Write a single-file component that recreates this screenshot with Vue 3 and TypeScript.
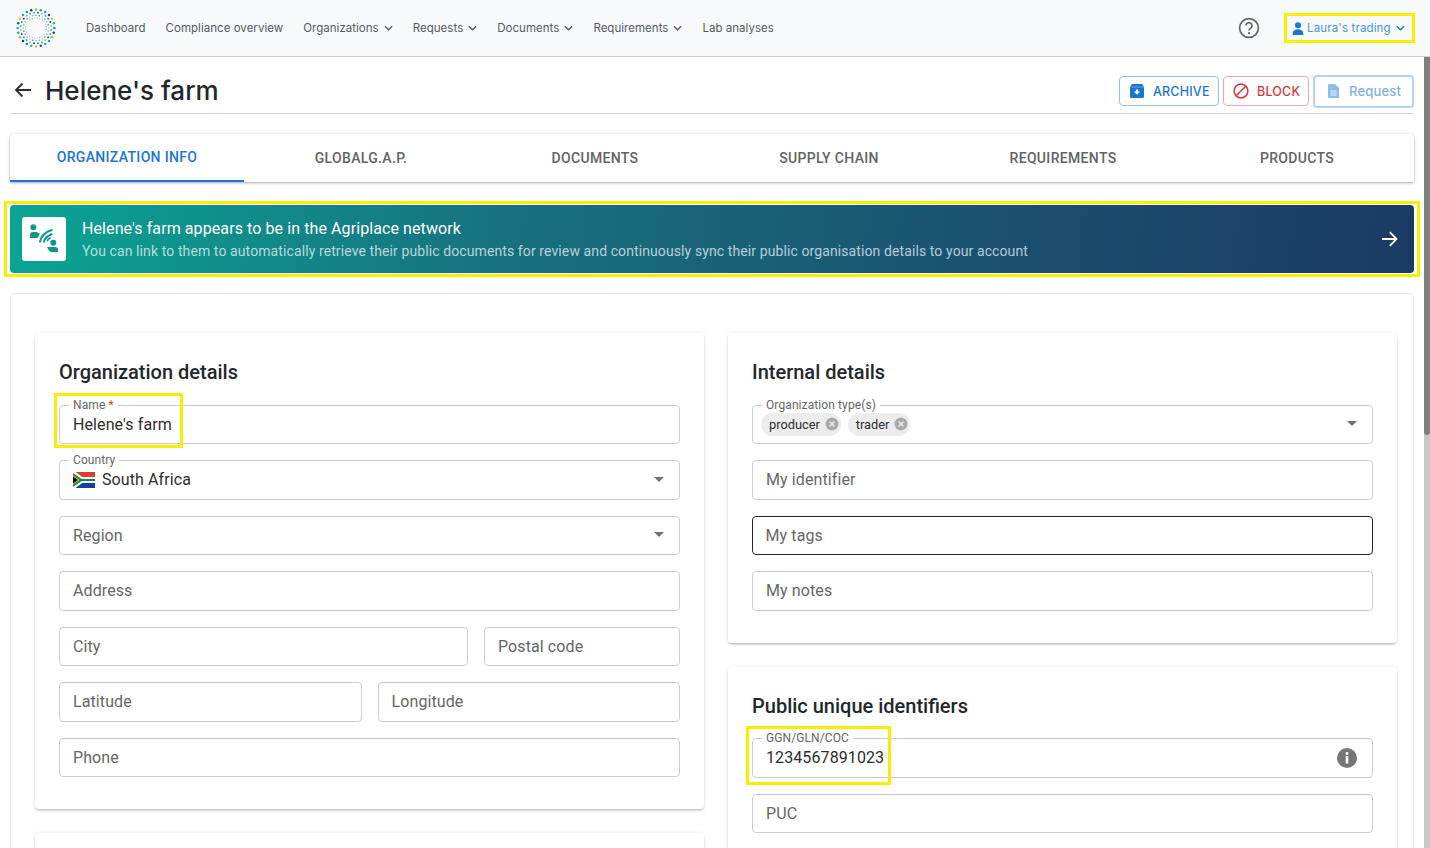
<script setup lang="ts">
const palette = ['#1f7fd6', '#1e3f66', '#8cc63f', '#17a89b', '#2a9fe0', '#24507f', '#a6d04a', '#1fb5a8']
interface Dot { x: number; y: number; r: number; c: string; o: number }
const dots: Dot[] = []
const rings = [
  { rad: 18.4, r: 1.25, off: 0, o: 1 },
  { rad: 15.4, r: 1.0, off: 0.5, o: 0.95 },
  { rad: 12.6, r: 0.75, off: 0, o: 0.8 },
  { rad: 10.2, r: 0.55, off: 0.5, o: 0.6 },
]
rings.forEach((ring, ri) => {
  for (let i = 0; i < 24; i++) {
    const a = ((i + ring.off) / 24) * Math.PI * 2
    dots.push({
      x: +(20 + ring.rad * Math.cos(a)).toFixed(2),
      y: +(20 + ring.rad * Math.sin(a)).toFixed(2),
      r: ring.r,
      c: palette[(i + ri * 3) % palette.length],
      o: ring.o,
    })
  }
})
const tabs = ['Organization info', 'GlobalG.A.P.', 'Documents', 'Supply chain', 'Requirements', 'Products']
</script>

<template>
  <div class="app">
    <header class="topbar">
      <svg class="logo" width="40" height="40" viewBox="0 0 40 40">
        <circle v-for="(d, i) in dots" :key="i" :cx="d.x" :cy="d.y" :r="d.r" :fill="d.c" :opacity="d.o" />
      </svg>
      <nav class="nav">
        <a>Dashboard</a>
        <a>Compliance overview</a>
        <a>Organizations <svg class="chev" viewBox="0 0 10 6"><path d="M1 1l4 4 4-4" /></svg></a>
        <a>Requests <svg class="chev" viewBox="0 0 10 6"><path d="M1 1l4 4 4-4" /></svg></a>
        <a>Documents <svg class="chev" viewBox="0 0 10 6"><path d="M1 1l4 4 4-4" /></svg></a>
        <a>Requirements <svg class="chev" viewBox="0 0 10 6"><path d="M1 1l4 4 4-4" /></svg></a>
        <a>Lab analyses</a>
      </nav>
      <svg class="help" width="22" height="22" viewBox="0 0 22 22">
        <circle cx="11" cy="11" r="9.4" fill="none" stroke="#666" stroke-width="1.7" />
        <path d="M8 8.600a3 3 0 1 1 4.700 2.500c-1.100.7-1.700 1.200-1.700 2.500" fill="none" stroke="#666" stroke-width="1.7" />
        <circle cx="11" cy="16.200" r="1.100" fill="#666" />
      </svg>
      <div class="user">
        <svg width="12" height="13" viewBox="0 0 12 13"><circle cx="6" cy="3.300" r="3" fill="#1976d2" /><path d="M.8 13v-1.800C.8 8.600 3 7.300 6 7.300s5.200 1.300 5.200 3.900V13z" fill="#1976d2" /></svg>
        <span>Laura's trading</span>
        <svg class="chev blue" viewBox="0 0 10 6"><path d="M1 1l4 4 4-4" /></svg>
        <i class="mark mark-user"></i>
      </div>
    </header>

    <div class="body">
      <main class="content">
        <div class="titlebar">
          <svg class="back" width="18" height="16" viewBox="0 0 18 16"><path d="M17 8H2M8.500 1.500L2 8l6.500 6.500" fill="none" stroke="#2b2f33" stroke-width="1.900" /></svg>
          <h1>Helene's farm</h1>
          <div class="actions">
            <button class="btn btn-archive">
              <svg width="14" height="14" viewBox="0 0 14 14"><path d="M2 0h10l2 3v9.500a1.500 1.500 0 0 1-1.500 1.500h-11A1.500 1.500 0 0 1 0 12.500V3z" fill="#1976d2" /><path d="M0 3h14" stroke="#7db3e8" stroke-width=".8" /><path d="M7 10.800L3.900 7.400h2V5.400h2.200v2h2z" fill="#fff" /></svg>
              ARCHIVE
            </button>
            <button class="btn btn-block">
              <svg width="16" height="16" viewBox="0 0 16 16"><circle cx="8" cy="8" r="6.900" fill="none" stroke="#d9363e" stroke-width="1.500" /><path d="M3.200 12.800L12.800 3.200" stroke="#d9363e" stroke-width="1.500" /></svg>
              BLOCK
            </button>
            <button class="btn btn-request">
              <svg width="11" height="14" viewBox="0 0 11 14"><path d="M1 0h6l4 4v9a1 1 0 0 1-1 1H1a1 1 0 0 1-1-1V1a1 1 0 0 1 1-1z" fill="#90bce8" /><path d="M2.500 7h6M2.500 9h6M2.500 11h6" stroke="#fff" stroke-width=".8" /></svg>
              Request
            </button>
          </div>
        </div>

        <div class="tabs">
          <div v-for="(t, i) in tabs" :key="t" class="tab" :class="{ active: i === 0 }">{{ t }}</div>
        </div>

        <div class="banner">
          <div class="banner-icon">
            <svg width="44" height="44" viewBox="0 0 44 44">
              <circle cx="11.300" cy="10.300" r="3" fill="#12958f" />
              <path d="M8 21v-3.500C8 15.800 9.300 15 11 15h3.500l3.500 1.800-2.500 4.200z" fill="#12958f" />
              <circle cx="31.300" cy="25.800" r="3" fill="#12958f" />
              <path d="M36 35v-2.500c0-1.500-1-2.500-2.500-2.500H25l1.500 3 2 2z" fill="#12958f" />
              <path d="M18 24.700Q19.700 16.300 29.700 13M22 24.700Q23 19.700 29.700 17.300" fill="none" stroke="#12958f" stroke-width="2" stroke-linecap="round" />
              <path d="M25.500 23.500Q26 21.500 28 21" fill="none" stroke="#12958f" stroke-width="1.800" stroke-linecap="round" />
            </svg>
          </div>
          <div class="banner-text">
            <div class="banner-title">Helene's farm appears to be in the Agriplace network</div>
            <div class="banner-sub">You can link to them to automatically retrieve their public documents for review and continuously sync their public organisation details to your account</div>
          </div>
          <svg class="banner-arrow" width="17" height="16" viewBox="0 0 17 16"><path d="M1 8h14.500M8.800 1.200L15.500 8l-6.700 6.800" fill="none" stroke="#fff" stroke-width="1.800" /></svg>
          <i class="mark mark-banner"></i>
        </div>

        <section class="sheet">
          <div class="col">
            <div class="card">
              <h2>Organization details</h2>
              <div class="fields">
                <div class="field filled">
                  <label class="float">Name <b>*</b></label>
                  <span class="value">Helene's farm</span>
                  <i class="mark mark-name"></i>
                </div>
                <div class="field filled">
                  <label class="float">Country</label>
                  <svg class="flag" width="22" height="16" viewBox="0 0 22 16">
                    <rect width="22" height="5.400" fill="#e03c31" />
                    <rect y="10.600" width="22" height="5.400" fill="#1a3fa0" />
                    <rect y="5.400" width="22" height="5.200" fill="#fff" />
                    <path d="M0 0h2.500l7.500 5.400h12v5.200H10L2.500 16H0z" fill="#fff" />
                    <path d="M0 1l8.700 5.900H22v2.200H8.700L0 15z" fill="#0a8a55" />
                    <path d="M0 3.200L6.800 8 0 12.800z" fill="#f5b81c" />
                    <path d="M0 4.600L4.800 8 0 11.400z" fill="#000" />
                  </svg>
                  <span class="value flag-value">South Africa</span>
                  <i class="caret"></i>
                </div>
                <div class="field"><span class="ph">Region</span><i class="caret"></i></div>
                <div class="field"><span class="ph">Address</span></div>
                <div class="row city">
                  <div class="field"><span class="ph">City</span></div>
                  <div class="field"><span class="ph">Postal code</span></div>
                </div>
                <div class="row even">
                  <div class="field"><span class="ph">Latitude</span></div>
                  <div class="field"><span class="ph">Longitude</span></div>
                </div>
                <div class="field"><span class="ph">Phone</span></div>
              </div>
            </div>
            <div class="card stub"></div>
          </div>

          <div class="col">
            <div class="card">
              <h2>Internal details</h2>
              <div class="fields">
                <div class="field filled chips-field">
                  <label class="float">Organization type(s)</label>
                  <span class="chip">producer<svg width="14" height="14" viewBox="0 0 14 14"><circle cx="7" cy="7" r="6.500" fill="#a9a9a9" /><path d="M4.500 4.500l5 5M9.500 4.500l-5 5" stroke="#eee" stroke-width="1.300" /></svg></span>
                  <span class="chip">trader<svg width="14" height="14" viewBox="0 0 14 14"><circle cx="7" cy="7" r="6.500" fill="#a9a9a9" /><path d="M4.500 4.500l5 5M9.500 4.500l-5 5" stroke="#eee" stroke-width="1.300" /></svg></span>
                  <i class="caret"></i>
                </div>
                <div class="field"><span class="ph">My identifier</span></div>
                <div class="field focused"><span class="ph">My tags</span></div>
                <div class="field"><span class="ph">My notes</span></div>
              </div>
            </div>
            <div class="card">
              <h2>Public unique identifiers</h2>
              <div class="fields">
                <div class="field filled">
                  <label class="float">GGN/GLN/COC</label>
                  <span class="value">1234567891023</span>
                  <svg class="info" width="20" height="20" viewBox="0 0 20 20"><circle cx="10" cy="10" r="10" fill="#757575" /><circle cx="10" cy="5.500" r="1.400" fill="#fff" /><rect x="8.700" y="8" width="2.600" height="7.500" rx=".6" fill="#fff" /></svg>
                  <i class="mark mark-ggn"></i>
                </div>
                <div class="field"><span class="ph">PUC</span></div>
              </div>
            </div>
          </div>
        </section>
      </main>
      <aside class="scrollbar"><div class="thumb"></div></aside>
    </div>
  </div>
</template>

<style>
html, body { margin: 0; overflow: hidden; background: #fff; }
</style>

<style scoped>
.app {
  width: 1430px;
  height: 848px;
  overflow: hidden;
  display: flex;
  flex-direction: column;
  font-family: Roboto, "Liberation Sans", sans-serif;
  color: #2b2f33;
}
.topbar {
  flex: none;
  height: 57px;
  box-sizing: border-box;
  background: #f8f9fb;
  border-bottom: 1px solid #cfcfcf;
  display: flex;
  align-items: center;
  padding: 0 20px 0 16px;
}
.logo { flex: none; }
.nav {
  display: flex;
  gap: 20px;
  margin-left: 30px;
  font-family: Inter, "Liberation Sans", sans-serif;
  font-size: 11.500px;
  letter-spacing: 0.03px;
  color: #555b61;
}
.nav a { display: flex; align-items: center; gap: 5px; white-space: nowrap; }
.chev { width: 9px; height: 6px; fill: none; stroke: #555b61; stroke-width: 1.500; }
.chev.blue { stroke: #1976d2; }
.help { margin-left: auto; }
.user {
  position: relative;
  margin-left: 24px;
  width: 131px;
  height: 30px;
  box-sizing: border-box;
  padding-left: 8px;
  margin-right: -5px;
  display: flex;
  align-items: center;
  gap: 3px;
  font-family: Inter, "Liberation Sans", sans-serif;
  font-size: 11.500px;
  letter-spacing: 0.15px;
  color: #4a96de;
}
.user .chev { margin-left: 2px; }
.mark {
  position: absolute;
  border: 3px solid #f6f000;
  pointer-events: none;
  box-sizing: border-box;
}
.mark-user { inset: 0; }
.mark-banner { top: -4px; bottom: -4px; left: -6px; right: -6px; }
.mark-name { top: -13px; left: -6px; width: 129px; height: 55px; }
.mark-ggn { top: -13px; left: -7px; width: 145px; height: 59px; }

.body { flex: 1; display: flex; min-height: 0; }
.content {
  flex: 1;
  min-width: 0;
  box-sizing: border-box;
  padding: 0 10px;
  overflow: hidden;
}
.scrollbar { flex: none; width: 6px; background: #c9c9c9; }
.thumb { height: 378px; background: #7f7f7f; border-radius: 0 0 3px 3px; }

.titlebar {
  height: 57px;
  box-sizing: border-box;
  border-bottom: 1px solid #d6d6d6;
  display: flex;
  align-items: center;
  padding: 11px 0 0 4px;
}
.back { flex: none; margin-top: -2px; }
.titlebar h1 {
  margin: 0 0 0 13px;
  font-family: Inter, "Liberation Sans", sans-serif;
  font-size: 26px;
  font-weight: 500;
  color: #23272b;
  white-space: nowrap;
}
.actions { margin-left: auto; display: flex; align-items: center; gap: 4px; margin-top: 1px; }
.btn {
  box-sizing: border-box;
  display: flex;
  align-items: center;
  background: #fff;
  border-radius: 4px;
  font-family: Inter, "Liberation Sans", sans-serif;
  font-weight: 500;
  font-size: 12.500px;
  letter-spacing: 0.2px;
  padding: 0;
}
.btn-archive { width: 100px; height: 30px; border: 1px solid #94c0ec; color: #1976d2; padding-left: 10px; gap: 9px; }
.btn-block { width: 86px; height: 30px; border: 1px solid #efa9ab; color: #d9363e; padding-left: 9px; gap: 8px; }
.btn-request { width: 101px; height: 33px; border: 2px solid #b5d3f0; color: #7fb0e3; padding-left: 13px; gap: 10px; font-size: 13px; }

.tabs {
  margin-top: 20px;
  height: 48px;
  display: grid;
  grid-template-columns: repeat(6, 1fr);
  background: #fff;
  border-radius: 4px 4px 0 0;
  box-shadow: 0 1px 3px rgba(0, 0, 0, 0.32), 0 0 2px rgba(0, 0, 0, 0.06);
}
.tab {
  display: flex;
  align-items: center;
  justify-content: center;
  font-size: 14px;
  font-weight: 500;
  letter-spacing: 0.33px;
  text-transform: uppercase;
  color: #636363;
  box-sizing: border-box;
  padding-bottom: 1px;
}
.tab.active { color: #1976d2; border-bottom: 2px solid #1976d2; padding-bottom: 0; }

.banner {
  position: relative;
  margin-top: 23px;
  height: 68px;
  border-radius: 4px;
  background: linear-gradient(98deg, #0aa594 0%, #17717f 35%, #1a5070 70%, #1a3a63 100%);
  display: flex;
  align-items: center;
  padding: 0 16px 0 12px;
  color: #fff;
}
.banner-icon {
  flex: none;
  width: 44px;
  height: 44px;
  background: #fff;
  border-radius: 3px;
}
.banner-icon svg { display: block; }
.banner-text { margin-left: 16px; flex: 1; min-width: 0; }
.banner-title { font-size: 16px; line-height: 22px; letter-spacing: 0.09px; }
.banner-sub { font-size: 14px; line-height: 20px; letter-spacing: 0.1px; color: rgba(255, 255, 255, 0.7); margin-top: 1px; }
.banner-arrow { flex: none; }

.sheet {
  margin-top: 20px;
  border: 1px solid #e8e8e8;
  border-radius: 4px;
  padding: 39px 16px 0 24px;
  display: grid;
  grid-template-columns: 669px 669px;
  column-gap: 24px;
  align-items: start;
}
.col { display: flex; flex-direction: column; gap: 24px; }
.card {
  background: #fff;
  border-radius: 4px;
  padding: 25px 24px 32px;
  box-shadow: 0 2px 3px -1px rgba(0, 0, 0, 0.3), 0 0 4px rgba(0, 0, 0, 0.08);
}
.card.stub { height: 60px; }
.card h2 {
  margin: 0 0 17.600px;
  font-size: 20px;
  line-height: 29px;
  font-weight: 500;
  color: #23272b;
}
.fields { display: flex; flex-direction: column; gap: 16px; }
.row { display: grid; gap: 16px; }
.row.city { grid-template-columns: 409px 196px; }
.row.even { grid-template-columns: 1fr 1fr; }
.field {
  position: relative;
  height: 39.500px;
  box-sizing: border-box;
  border: 1px solid #cdcdcd;
  border-radius: 4px;
  display: flex;
  align-items: center;
  padding: 0 13px;
  font-size: 16px;
  letter-spacing: 0.1px;
  background: #fff;
}
.field.focused { border: 1.500px solid #23272b; padding: 0 12.500px; }
.ph { color: #666; }
.value { color: #2d2d2d; }
.float {
  position: absolute;
  top: -8px;
  left: 9px;
  padding: 0 4px;
  background: #fff;
  font-size: 12px;
  line-height: 14px;
  letter-spacing: 0.1px;
  color: #666;
}
.float b { color: #d9363e; font-weight: 400; }
.flag { flex: none; }
.flag-value { margin-left: 7px; }
.caret {
  position: absolute;
  right: 15px;
  top: 50%;
  margin-top: -3px;
  width: 0;
  height: 0;
  border-left: 5px solid transparent;
  border-right: 5px solid transparent;
  border-top: 5.500px solid #757575;
}
.chips-field { padding-left: 8px; gap: 7px; }
.chip {
  height: 23px;
  border-radius: 12px;
  background: #ececec;
  display: inline-flex;
  align-items: center;
  gap: 5px;
  padding: 0 2px 0 8px;
  font-size: 12.800px;
  letter-spacing: 0;
  color: #2d2d2d;
}
.info { position: absolute; right: 15px; top: 9px; }
</style>
